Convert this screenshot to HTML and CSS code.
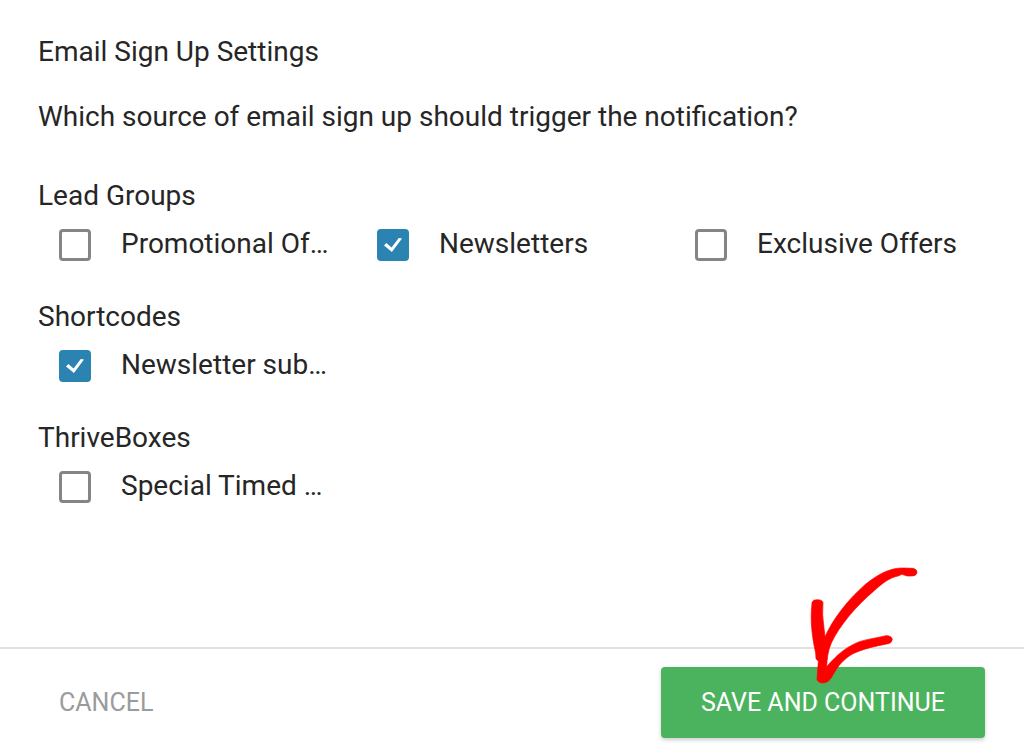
FILE: index.html
```html
<!DOCTYPE html>
<html lang="en">
<head>
<meta charset="utf-8">
<title>Email Sign Up Settings</title>
<link rel="stylesheet" href="styles.css">
</head>
<body>
<form class="dialog">
  <main class="content">
    <h1 class="title">Email Sign Up Settings</h1>
    <p class="question">Which source of email sign up should trigger the notification?</p>
    <fieldset class="group">
      <legend class="legend">Lead Groups</legend>
      <div class="options">
        <label class="option"><input class="check" type="checkbox"><span class="name">Promotional Of…</span></label>
        <label class="option"><input class="check" type="checkbox" checked><span class="name">Newsletters</span></label>
        <label class="option"><input class="check" type="checkbox"><span class="name">Exclusive Offers</span></label>
      </div>
    </fieldset>
    <fieldset class="group">
      <legend class="legend">Shortcodes</legend>
      <div class="options">
        <label class="option"><input class="check" type="checkbox" checked><span class="name">Newsletter sub…</span></label>
      </div>
    </fieldset>
    <fieldset class="group">
      <legend class="legend">ThriveBoxes</legend>
      <div class="options">
        <label class="option"><input class="check" type="checkbox"><span class="name">Special Timed …</span></label>
      </div>
    </fieldset>
  </main>
  <footer class="actions">
    <button class="cancel" type="button">CANCEL</button>
    <div class="primary">
      <button class="save" type="submit">SAVE AND CONTINUE</button>
      <svg class="arrow" viewBox="0 0 510 450" aria-hidden="true">
        <path d="M96 158Q98 149 110 149Q128 149 129 158Q126 195 131 225L135 260C160 205 203 150 255 104C304 64 340 53 370 54L400 55Q411 58 411 67Q410 78 397 78L381 78L366 73L354 78C330 83 310 97 284 121C229 167 180 225 154 279C144 301 141 328 140 350C170 314 202 289 238 275C267 266 290 264 318 257Q334 256 337 268Q335 280 325 281C286 288 246 298 219 311C191 327 173 349 160 373C151 390 143 399 127 399Q112 397 111 387L115 334L108 326L107 309C98 270 92 225 94 186Z"/>
      </svg>
    </div>
  </footer>
</form>
</body>
</html>
```

FILE: styles.css
```css
* { box-sizing: border-box; }
body {
  margin: 0;
  background: #fff;
  color: #262626;
  font: 28px/36px Roboto, sans-serif;
}
.dialog { display: flex; flex-direction: column; min-height: 100vh; }
.content { flex: 1; padding: 34px 32px 32px 38px; }
.title { margin: 0 0 29px; font: inherit; }
.question { margin: 0 0 43px; }
.group { min-width: 0; margin: 0 0 37px; padding: 0; border: 0; }
.legend { padding: 0; }
.options {
  display: grid;
  grid-template-columns: repeat(3, 1fr);
  padding-top: 12px;
}
.option { display: flex; align-items: flex-start; gap: 30px; padding-left: 21px; }
.check {
  appearance: none;
  display: grid;
  place-items: center;
  flex: none;
  width: 32px;
  height: 32px;
  margin: 3px 0 0;
  border: 3px solid #858585;
  border-radius: 4px;
  background: #fff;
}
.check:checked { border-color: #2a83b1; background: #2a83b1; }
.check:checked::after {
  content: "";
  width: 18px;
  height: 14px;
  background: #fff;
  clip-path: polygon(0 54%, 13% 35%, 42% 68%, 82% 0, 100% 3%, 44% 100%);
}
.name { white-space: nowrap; }
.actions {
  display: flex;
  align-items: center;
  justify-content: space-between;
  padding: 18px 39px 13px;
  border-top: 2px solid #e2e2e2;
}
.cancel, .save { border: 0; font: 25px/31px Roboto, sans-serif; }
.cancel { padding: 20px; background: none; color: #9b9b9b; }
.primary { position: relative; display: flex; }
.save {
  padding: 20px 40px;
  border-radius: 4px;
  background: #4bb35e;
  color: #fff;
  box-shadow: 0 2px 4px #0003;
}
.arrow {
  position: absolute;
  right: 35px;
  bottom: 38px;
  width: 170px;
  height: 150px;
  fill: #f00;
  stroke: #f00;
  stroke-width: 2;
  pointer-events: none;
}
```
